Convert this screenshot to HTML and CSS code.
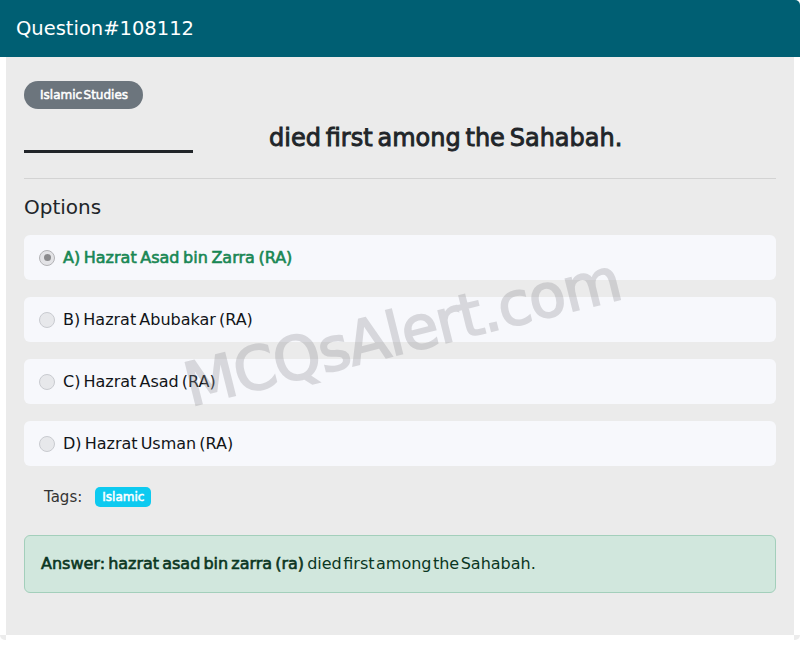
FILE: index.html
```html
<!DOCTYPE html>
<html lang="en">
<head>
<meta charset="utf-8">
<title>Question#108112</title>
<link rel="stylesheet" href="styles.css">
</head>
<body>
<div class="card">
  <div class="card-header">Question#108112</div>
  <div class="card-body">
    <div class="cat-row"><span class="badge-cat">Islamic Studies</span></div>
    <div class="question"><span class="blank"></span><span class="q-text">died first among the Sahabah.</span></div>
    <hr class="divider">
    <div class="options-title">Options</div>
    <div class="options">
      <div class="option correct"><span class="radio checked"></span><span class="opt-text">A) Hazrat Asad bin Zarra (RA)</span></div>
      <div class="option"><span class="radio"></span><span class="opt-text">B) Hazrat Abubakar (RA)</span></div>
      <div class="option"><span class="radio"></span><span class="opt-text">C) Hazrat Asad (RA)</span></div>
      <div class="option"><span class="radio"></span><span class="opt-text">D) Hazrat Usman (RA)</span></div>
    </div>
    <div class="tags"><span class="tags-label">Tags:</span><span class="tag">Islamic</span></div>
    <div class="answer"><strong class="answer-key">Answer: hazrat asad bin zarra (ra)</strong> <span class="answer-rest">died first among the Sahabah.</span></div>
    <div class="watermark">MCQsAlert.com</div>
  </div>
  <div class="card-foot"><span class="corner corner-left"></span><span class="foot-mid"></span><span class="corner corner-right"></span></div>
</div>
</body>
</html>
```
FILE: styles.css
```css
html, body {
  margin: 0;
  padding: 0;
  background: #ffffff;
}

body {
  font-family: "DejaVu Sans", "Noto Sans", sans-serif;
  color: #212529;
}

.card {
  width: 800px;
}

.card-header {
  height: 57px;
  display: flex;
  align-items: center;
  padding: 0 16px;
  background: #005f73;
  color: #ffffff;
  font-size: 19.5px;
  border-top-right-radius: 5px;
}

.card-body {
  position: relative;
  margin: 0 6px;
  padding: 24px 18px 42px;
  background: #ebebeb;
}

.cat-row {
  display: flex;
}

.badge-cat {
  height: 28px;
  line-height: 28px;
  padding: 0 15px 0 16px;
  background: #6c757d;
  color: #ffffff;
  border-radius: 14px;
  font-size: 12px;
  word-spacing: -2.4px;
  -webkit-text-stroke: 0.5px #ffffff;
}

.question {
  display: flex;
  align-items: flex-end;
  margin-top: 15px;
}

.blank {
  width: 169px;
  border-bottom: 3px solid #212529;
}

.q-text {
  margin-left: 76px;
  font-size: 24px;
  line-height: 29px;
  word-spacing: -2.8px;
  color: #212529;
  -webkit-text-stroke: 0.9px #212529;
}

.divider {
  height: 0;
  margin: 25px 0 0;
  border: 0;
  border-top: 1px solid #d3d3d3;
}

.options-title {
  margin-top: 16px;
  font-size: 20px;
  line-height: 24px;
  color: #212529;
}

.options {
  display: flex;
  flex-direction: column;
  gap: 17px;
  margin-top: 16px;
}

.option {
  height: 45px;
  display: flex;
  align-items: center;
  gap: 8px;
  padding: 0 15px;
  background: #f7f8fc;
  border-radius: 6px;
}

.radio {
  box-sizing: border-box;
  width: 16px;
  height: 16px;
  flex: none;
  display: flex;
  align-items: center;
  justify-content: center;
  border: 1px solid #c9cbd0;
  border-radius: 50%;
  background: #e7e8eb;
}

.radio.checked {
  border-color: #b3b3b6;
  background: #e3e3e6;
}

.radio.checked::after {
  content: "";
  width: 7px;
  height: 7px;
  border-radius: 50%;
  background: #8a8a8c;
}

.opt-text {
  font-size: 16px;
  line-height: 24px;
  word-spacing: -2px;
  color: #111418;
}

.correct .opt-text {
  color: #198754;
  word-spacing: -1.5px;
  -webkit-text-stroke: 0.6px #198754;
}

.tags {
  display: flex;
  align-items: center;
  gap: 13px;
  height: 20px;
  margin-top: 21px;
  padding-left: 20px;
}

.tags-label {
  font-size: 15px;
  line-height: 20px;
  color: #333333;
}

.tag {
  height: 20px;
  line-height: 20px;
  padding: 0 7px;
  background: #0dcaf0;
  color: #ffffff;
  border-radius: 5px;
  font-size: 12px;
  -webkit-text-stroke: 0.5px #ffffff;
}

.answer {
  margin-top: 28px;
  padding: 16px;
  background: #d1e7dd;
  border: 1px solid #a3cfbb;
  border-radius: 6px;
  color: #0a3622;
  font-size: 16px;
  line-height: 24px;
  word-spacing: -2px;
}

.answer-key {
  font-weight: normal;
  -webkit-text-stroke: 0.6px #0a3622;
}

.answer-rest {
  word-spacing: -3.6px;
}

.watermark {
  position: absolute;
  left: 396px;
  top: 275px;
  transform: translate(-50%, -50%) rotate(-14deg);
  font-size: 60px;
  line-height: 1;
  letter-spacing: -1.2px;
  white-space: nowrap;
  color: #8e8e94;
  -webkit-text-stroke: 1.8px #8e8e94;
  opacity: 0.3;
  pointer-events: none;
}

.card-foot {
  display: flex;
  height: 5px;
}

.corner {
  width: 6px;
  background: #ececec;
}

.corner-left {
  border-bottom-left-radius: 5px;
}

.corner-right {
  border-bottom-right-radius: 5px;
}

.foot-mid {
  flex: 1;
}
```
